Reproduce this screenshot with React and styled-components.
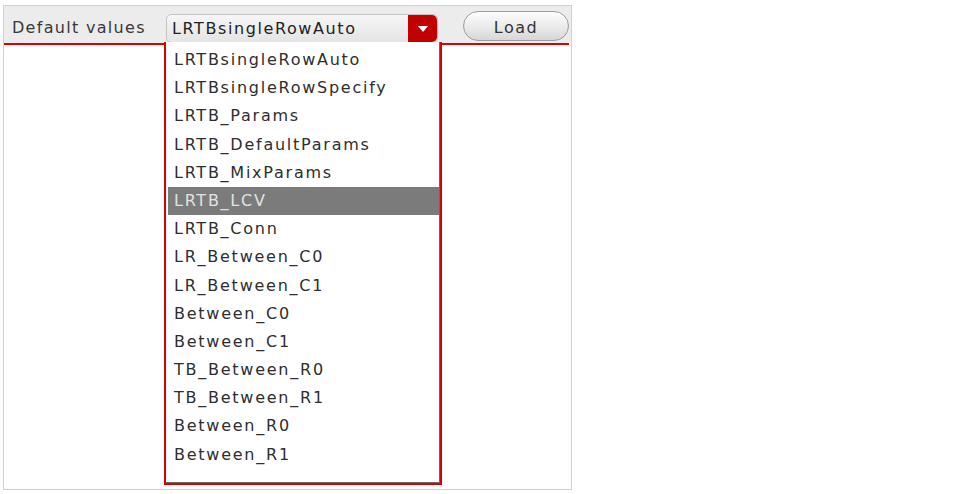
import React from 'react';
import styled, { createGlobalStyle } from 'styled-components';

const options = [
  'LRTBsingleRowAuto',
  'LRTBsingleRowSpecify',
  'LRTB_Params',
  'LRTB_DefaultParams',
  'LRTB_MixParams',
  'LRTB_LCV',
  'LRTB_Conn',
  'LR_Between_C0',
  'LR_Between_C1',
  'Between_C0',
  'Between_C1',
  'TB_Between_R0',
  'TB_Between_R1',
  'Between_R0',
  'Between_R1',
];

const App = () => {
  return (
    <>
      <GlobalStyle />
      <Panel>
        <TopBar>
          <Label>Default values</Label>
          <Select>
            <SelectText>LRTBsingleRowAuto</SelectText>
            <ArrowButton>
              <svg width="10" height="6" viewBox="0 0 10 6">
                <path d="M0 0 L10 0 L5 6 Z" fill="#fff" />
              </svg>
            </ArrowButton>
          </Select>
          <LoadButton>Load</LoadButton>
        </TopBar>
        <Content />
        <DropList>
          {options.map((o) => (
            <Option key={o} selected={o === 'LRTB_LCV'}>{o}</Option>
          ))}
        </DropList>
      </Panel>
    </>
  );
};

const GlobalStyle = createGlobalStyle`
  body {
    margin: 0;
    background: #fff;
    font-family: "DejaVu Sans", "Liberation Sans", sans-serif;
  }
`;

const Panel = styled.div`
  position: relative;
  margin: 5px 0 0 3px;
  width: 567px;
  height: 483px;
  border: 1px solid #d2d2d2;
  background: #fff;
  display: flex;
  flex-direction: column;
`;

const TopBar = styled.div`
  height: 37px;
  background: #ececec;
  display: flex;
  align-items: flex-start;
  padding-left: 8px;
`;

const Label = styled.span`
  margin-top: 12px;
  font-size: 16px;
  letter-spacing: 1.3px;
  color: #383838;
  width: 154px;
`;

const Select = styled.div`
  display: flex;
  align-items: stretch;
  width: 270px;
  height: 27px;
  margin-top: 8px;
  border: 1px solid #c4c4c4;
  border-radius: 5px;
  background: linear-gradient(#f6f6f6, #e4e4e4);
  overflow: hidden;
`;

const SelectText = styled.span`
  flex: 1;
  padding-left: 5px;
  font-size: 16px;
  letter-spacing: 1.6px;
  line-height: 27px;
  color: #222;
`;

const ArrowButton = styled.span`
  width: 29px;
  background: #c30000;
  border-radius: 0 5px 5px 0;
  display: flex;
  align-items: center;
  justify-content: center;
`;

const LoadButton = styled.button`
  margin-left: 25px;
  margin-top: 5px;
  width: 106px;
  height: 30px;
  border: 1px solid #9c9c9c;
  border-radius: 15px;
  background: linear-gradient(#fdfdfd, #e8e8e8 60%, #d6d6d6);
  font-family: "DejaVu Sans", "Liberation Sans", sans-serif;
  font-size: 16px;
  letter-spacing: 1.5px;
  padding: 3px 0 0;
  color: #333;
`;

const Content = styled.div`
  flex: 1;
  border-top: 2px solid #e00000;
  margin-right: 2px;
`;

const DropList = styled.div`
  position: absolute;
  left: 160px;
  top: 36px;
  width: 274px;
  height: 437px;
  box-sizing: content-box;
  border: 2px solid #d80000;
  border-top: none;
  background: #fff;
  box-shadow: inset -1px -1px 0 #6a6a6a;
  padding-top: 4px;
`;

const Option = styled.div`
  height: 28.2px;
  line-height: 28.2px;
  margin: 0 1px 0 2px;
  padding-left: 6px;
  font-size: 16px;
  letter-spacing: 1.75px;
  color: ${({ selected }) => (selected ? '#e2e2e2' : '#2e2e2e')};
  background: ${({ selected }) => (selected ? '#7b7b7b' : 'transparent')};
`;

export default App;
